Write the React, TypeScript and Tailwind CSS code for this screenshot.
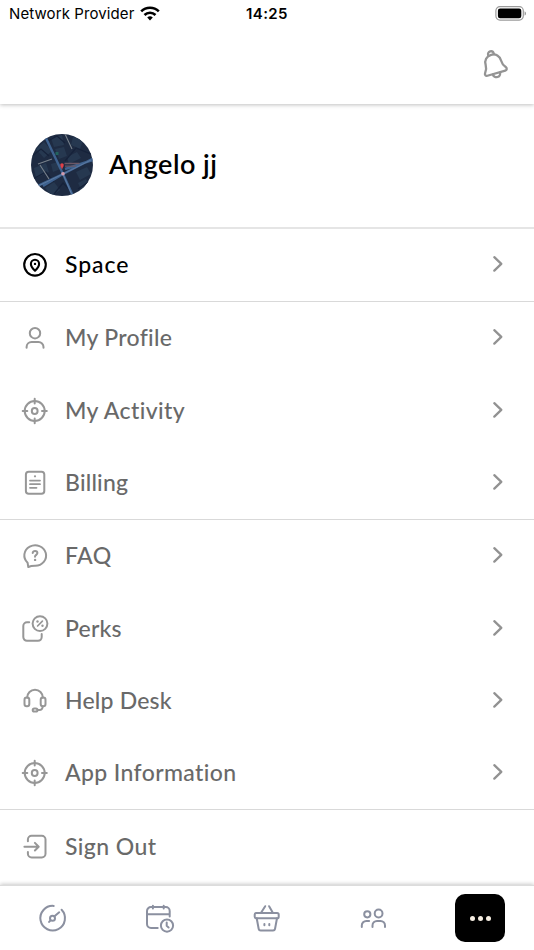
import React from "react";

type IconProps = { children: React.ReactNode; className?: string };

const Icon = ({ children, className = "text-[#979797]" }: IconProps) => (
  <svg
    viewBox="0 0 30 30"
    className={`h-[30px] w-[30px] shrink-0 overflow-visible ${className}`}
    fill="none"
    stroke="currentColor"
    strokeWidth="2"
    strokeLinecap="round"
    strokeLinejoin="round"
  >
    {children}
  </svg>
);

const SpaceIcon = () => (
  <Icon className="text-black">
    <circle cx="15" cy="14.8" r="10.8" strokeWidth="2.1" />
    <path d="M15 20.7c-1.500-1.500-4.100-4.200-4.100-6.800a4.100 4.100 0 0 1 8.200 0c0 2.600-2.600 5.300-4.100 6.800Z" strokeWidth="2.100" />
    <circle cx="15" cy="13.900" r="1.200" fill="currentColor" stroke="none" />
  </Icon>
);

const ProfileIcon = () => (
  <Icon>
    <circle cx="15" cy="10.200" r="5.200" />
    <path d="M6.600 24.800V24a5 5 0 0 1 5-5h6.900a5 5 0 0 1 5 5v.8" />
  </Icon>
);

const TargetIcon = () => (
  <Icon>
    <circle cx="14.700" cy="15" r="10" />
    <circle cx="14.700" cy="15" r="2.900" />
    <path d="M14.700 2.700v4.800M14.700 22.500v4.800M2.700 15h4.600M22 15h4.800" />
  </Icon>
);

const BillingIcon = () => (
  <Icon>
    <rect x="5.900" y="3.800" width="18.400" height="22" rx="2.800" />
    <path d="M10 12.600h10M10 16.200h10M10 19.800h6.500" strokeWidth="1.800" />
    <circle cx="15" cy="8.300" r="1.100" fill="currentColor" stroke="none" />
  </Icon>
);

const FaqIcon = () => (
  <Icon>
    <path d="M8.300 26 7.600 21.800A10.900 10.200 0 1 1 15 24.700c-2.500 0-4.500.2-6.700 1.300Z" />
    <path d="M12.700 12.100c0-3 4.700-2.900 4.700 0 0 1.700-2.400 1.900-2.400 3.600" />
    <circle cx="15.100" cy="18.900" r="1.200" fill="currentColor" stroke="none" />
  </Icon>
);

const PerksIcon = () => (
  <Icon>
    <path d="M9.200 8.300H7A3.700 3.700 0 0 0 3.300 12v11.100A3.700 3.700 0 0 0 7 26.800h11a3.700 3.700 0 0 0 3.700-3.700V20" />
    <circle cx="20" cy="9.600" r="7.400" />
    <path d="m17.600 12 4.800-4.800" strokeWidth="1.700" />
    <circle cx="17.500" cy="7.500" r="1.200" fill="currentColor" stroke="none" />
    <circle cx="22.500" cy="11.800" r="1.200" fill="currentColor" stroke="none" />
  </Icon>
);

const HelpIcon = () => (
  <Icon>
    <path d="M7.200 11.800v-.3a7.800 7.800 0 0 1 15.600 0v.3" />
    <rect x="4.500" y="11.600" width="4.800" height="8.600" rx="2.200" />
    <rect x="20.700" y="11.600" width="4.800" height="8.600" rx="2.200" />
    <rect x="12.700" y="22.400" width="4.800" height="3.200" rx="1.600" />
    <path d="M17.500 24h1.700c2.200 0 3.500-1.200 3.500-3.800" />
  </Icon>
);

const SignOutIcon = () => (
  <Icon>
    <path d="M7.900 9.200V7.500a3.700 3.700 0 0 1 3.700-3.700h10.200a3.700 3.700 0 0 1 3.700 3.700v14.200a3.700 3.700 0 0 1-3.700 3.700H11.600a3.700 3.700 0 0 1-3.700-3.700V20" />
    <path d="M4.400 14.700h14.200M14.900 10.900l3.800 3.800-3.800 3.800" />
  </Icon>
);

const Chevron = () => (
  <svg viewBox="0 0 12 18" className="mb-[2px] h-[18px] w-3" fill="none" stroke="#929292" strokeWidth="2.300" strokeLinecap="round" strokeLinejoin="round">
    <path d="m2.300 2.200 7 6.700-7 6.700" />
  </svg>
);

type Item = { label: string; icon: React.ReactNode; tracking: string; dark?: boolean; plain?: boolean };

const sections: { items: Item[]; className: string }[] = [
  {
    className: "border-t-2 border-[#e5e5e5]",
    items: [{ label: "Space", icon: <SpaceIcon />, tracking: "tracking-[0.95px]", dark: true }],
  },
  {
    className: "border-t border-[#d9d9d9]",
    items: [
      { label: "My Profile", icon: <ProfileIcon />, tracking: "tracking-[0.3px]" },
      { label: "My Activity", icon: <TargetIcon />, tracking: "tracking-[0.4px]" },
      { label: "Billing", icon: <BillingIcon />, tracking: "tracking-[0.2px]" },
    ],
  },
  {
    className: "border-t border-[#d9d9d9]",
    items: [
      { label: "FAQ", icon: <FaqIcon />, tracking: "tracking-[0.4px]" },
      { label: "Perks", icon: <PerksIcon />, tracking: "tracking-[0.2px]" },
      { label: "Help Desk", icon: <HelpIcon />, tracking: "tracking-[0.2px]" },
      { label: "App Information", icon: <TargetIcon />, tracking: "tracking-[0.37px]" },
    ],
  },
  {
    className: "border-t border-[#d9d9d9]",
    items: [{ label: "Sign Out", icon: <SignOutIcon />, tracking: "tracking-[0.4px]", plain: true }],
  },
];

const MenuRow = ({ label, icon, tracking, dark, plain }: Item) => (
  <div className="flex h-[72.3px] items-center pl-5 pr-[30px]">
    {icon}
    <span className={`mb-[2px] ml-[15px] flex-1 text-[23px] leading-[30px] font-medium ${tracking} ${dark ? "text-black" : "text-[#696969]"}`}>
      {label}
    </span>
    {!plain && <Chevron />}
  </div>
);

const StatusBar = () => (
  <div className="grid h-7 grid-cols-3 items-center pl-[9px] pr-2 font-[Inter,sans-serif] text-[15px] text-black">
    <div className="flex items-center gap-[6px] whitespace-nowrap">
      <span className="tracking-[0.1px]">Network Provider</span>
      <svg viewBox="0 0 20 15" className="mb-[2px] h-[15px] w-5" fill="none" stroke="#000" strokeWidth="2.600">
        <path d="M1.200 5.400a12.600 12.600 0 0 1 17.600 0" />
        <path d="M4.500 9a7.900 7.900 0 0 1 11 0" />
        <path d="M10 14.500 7.200 11.600a4 4 0 0 1 5.600 0Z" fill="#000" stroke="none" />
      </svg>
    </div>
    <span className="pr-px text-center font-semibold tracking-[0.4px]">14:25</span>
    <svg viewBox="0 0 31 15" className="mb-[2px] h-[15px] w-[31px] justify-self-end">
      <rect x=".9" y=".7" width="27.400" height="13.400" rx="4" fill="none" stroke="#9b9b9b" strokeWidth="1.200" />
      <rect x="2.900" y="2.600" width="23.400" height="9.600" rx="2.200" />
      <path d="M29.600 5.200c1.700.8 1.700 3.600 0 4.400Z" fill="#8c8c8c" />
    </svg>
  </div>
);

const Bell = () => (
  <svg viewBox="0 0 32 32" className="h-8 w-8" fill="none" stroke="#949494" strokeWidth="2.300" strokeLinecap="round" strokeLinejoin="round">
    <g transform="rotate(-16 16 16)">
      <path d="M16 5.400c-5 0-8 3.600-8 8.200 0 4.200-1.200 5.800-2.700 7.600-1.200 1.500-.4 3.300 1.400 3.300h18.600c1.800 0 2.600-1.800 1.400-3.300-1.500-1.800-2.700-3.400-2.700-7.600 0-4.600-3-8.200-8-8.200Z" />
      <path d="M13.100 5.500v-.7a2.900 2.900 0 0 1 5.800 0v.7" />
      <path d="M12.300 25a3.700 3.500 0 0 0 7.400 0" />
    </g>
  </svg>
);

const Avatar = () => (
  <svg viewBox="0 0 62 62" className="h-[62px] w-[62px] shrink-0">
    <defs>
      <clipPath id="avatar">
        <circle cx="31" cy="31" r="31" />
      </clipPath>
    </defs>
    <g clipPath="url(#avatar)">
      <path fill="#1e2b42" d="M0 0h62v62H0z" />
      <g fill="#263850">
        <path d="m5 15 8-7 8 9-8 7zM20 4l11-3 2 10-10 2zM24 15l9-2 3 9-8 3zM42 3l10 3-3 9-9-4zM36 23l10-5 4 6-12 6zM3 34l12-5 3 9-13 6zM20 30l7-2 2 7-7 3zM14 54l9-6 6 8-8 6zM45 38l11-5 4 7-11 6zM47 49l8-4 4 8-8 4z" />
      </g>
      <g fill="none" stroke="#16223a" strokeWidth="1.200">
        <path d="m0 23 10-8 8 7M17 7l9-5 8 7M34 27l11-13 17 7M0 46l15-8 8 10M23 60l9-11 8 8M47 55l15-10" />
      </g>
      <g fill="none" stroke="#78818b" strokeWidth="1.100">
        <path d="m7 30 14-5M9 31l9 14M34 0l7 15" />
      </g>
      <path d="M26 21v-3" stroke="#22635d" strokeWidth="3" />
      <g fill="none" stroke="#3e628f" strokeWidth="2.400">
        <path d="M13 0 32 40l10 22M0 55l32-15 31-16M12 52l20-12M34 35l28-9" />
      </g>
      <path d="m32 40 9 21M5 53l27-13 28-14" stroke="#6480a5" strokeWidth=".8" fill="none" />
      <path d="M33.500 29.500h15M34 32.200h11" stroke="#6b5867" strokeWidth="1.300" />
      <circle cx="31" cy="31" r="1.800" fill="#df4149" />
      <path d="m29.500 32 1.500 3.500 1.500-3.500Z" fill="#df4149" />
      <circle cx="32" cy="39.800" r="1.800" fill="#d29bad" />
    </g>
  </svg>
);

const navIcons = [
  <>
    <path d="M15.700 2.900A12.300 12.300 0 1 0 23.600 6.700" />
    <circle cx="14.500" cy="15.300" r="2.500" />
    <path d="m16.500 13.300 4.700-4M12.500 17.300l-1.400 1.600" />
  </>,
  <>
    <path d="M12.700 24.900H6a4 4 0 0 1-4-4V8.100a4 4 0 0 1 4-4h14.700a4 4 0 0 1 4 4v5.300M2 11.300h22.700M7.900 2.800v2.800M18.700 2.800v2.800" />
    <circle cx="22" cy="22.600" r="6.100" />
    <path d="M21.700 19.600v3.200l1.900 1.700" />
  </>,
  <>
    <rect x="2.700" y="9.900" width="24" height="5.400" rx="1.600" />
    <path d="m4.700 15.300 2 10.700a2 2 0 0 0 2 1.600h12.300a2 2 0 0 0 2-1.600l2-10.700M9.200 9.500l4-6.300M20.700 9.500l-3.600-6.300M12.400 20.900v1.300M17.300 20.900v1.300" />
  </>,
  <>
    <circle cx="8.300" cy="11.300" r="3.100" />
    <circle cx="19.600" cy="10.500" r="3.900" />
    <path d="M2.800 23.900v-1.400A4.500 4.500 0 0 1 7.300 18h2.800M13.500 23.900v-1.400A4.500 4.500 0 0 1 18 18h3.500a4.500 4.500 0 0 1 4.500 4.500v1.400" />
  </>,
];

const BottomNav = () => (
  <nav className="relative grid h-[65px] grid-cols-5 border-t border-[#dcdcdc] bg-white pt-[7px] shadow-[0_-1px_4px_rgba(0,0,0,0.22)]">
    {navIcons.map((icon, i) => (
      <div key={i} className="flex h-[50px] items-center justify-center">
        <Icon className="text-[#8b90a0]">{icon}</Icon>
      </div>
    ))}
    <div className="flex h-[50px] items-center justify-center pr-px">
      <div className="flex h-12 w-[50px] items-center justify-center gap-[3px] rounded-[10px] bg-black">
        <span className="h-[5px] w-[5px] rounded-full bg-[#f5ede1]" />
        <span className="h-[5px] w-[5px] rounded-full bg-[#f5ede1]" />
        <span className="h-[5px] w-[5px] rounded-full bg-[#f5ede1]" />
      </div>
    </div>
  </nav>
);

const App = () => {
  return (
    <div className="flex h-[950px] w-[534px] flex-col overflow-hidden bg-white font-[Lato,sans-serif]">
      <header className="relative h-[104px] bg-white shadow-[0_1px_4px_rgba(0,0,0,0.25)]">
        <StatusBar />
        <div className="flex h-[74px] items-center justify-end pr-6">
          <Bell />
        </div>
      </header>

      <main className="flex-1">
        <div className="flex h-[123px] items-center gap-4 pb-px pl-[31px]">
          <Avatar />
          <h1 className="pb-[2px] text-[27px] font-semibold leading-9 tracking-[0.5px] text-black">Angelo jj</h1>
        </div>
        {sections.map((section, i) => (
          <section key={i} className={section.className}>
            {section.items.map((item) => (
              <MenuRow key={item.label} {...item} />
            ))}
          </section>
        ))}
      </main>

      <BottomNav />
    </div>
  );
};

export default App;
